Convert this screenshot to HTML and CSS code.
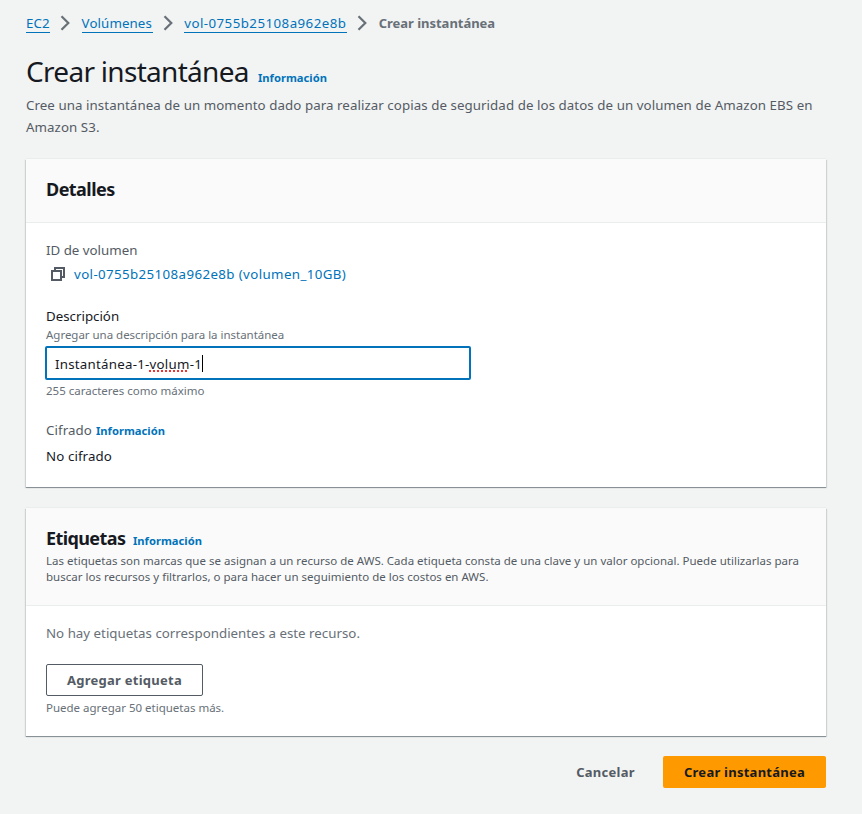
FILE: index.html
```html
<!DOCTYPE html>
<html lang="es">
<head>
<meta charset="utf-8">
<title>Crear instantánea</title>
<link rel="stylesheet" href="styles.css">
</head>
<body>
<main class="page">
  <nav class="crumbs">
    <a class="crumb crumb-ec2" href="#">EC2</a>
    <svg class="chevron" width="10" height="16" viewBox="0 0 10 16"><path d="M1.5 1.2 8.3 8 1.5 14.8"/></svg>
    <a class="crumb crumb-volumes" href="#">Volúmenes</a>
    <svg class="chevron" width="10" height="16" viewBox="0 0 10 16"><path d="M1.5 1.2 8.3 8 1.5 14.8"/></svg>
    <a class="crumb crumb-id" href="#">vol-0755b25108a962e8b</a>
    <svg class="chevron" width="10" height="16" viewBox="0 0 10 16"><path d="M1.5 1.2 8.3 8 1.5 14.8"/></svg>
    <span class="current">Crear instantánea</span>
  </nav>
  <header class="heading">
    <h1>Crear instantánea</h1>
    <a class="info" href="#">Información</a>
  </header>
  <p class="intro">Cree una instantánea de un momento dado para realizar copias de seguridad de los datos de un volumen de Amazon EBS en<br>Amazon S3.</p>

  <section class="card details">
    <div class="card-head"><h2>Detalles</h2></div>
    <div class="card-body">
      <div class="label volume-label">ID de volumen</div>
      <div class="volume">
        <svg class="copy" width="16" height="16" viewBox="0 0 16 16"><path d="M2 5h9v9H2z"/><path d="M5 5V2h9v9h-3"/></svg>
        <a class="volume-link" href="#">vol-0755b25108a962e8b (volumen_10GB)</a>
      </div>
      <div class="field-name">Descripción</div>
      <div class="hint field-hint">Agregar una descripción para la instantánea</div>
      <div class="input"><span class="value">Instantánea-1-<span class="misspelled">volum</span>-1</span><span class="caret"></span></div>
      <div class="hint limit">255 caracteres como máximo</div>
      <div class="encryption"><span class="label encryption-label">Cifrado</span><a class="info" href="#">Información</a></div>
      <div class="encryption-value">No cifrado</div>
    </div>
  </section>

  <section class="card tags">
    <div class="card-head">
      <div class="tags-title"><h2>Etiquetas</h2><a class="info" href="#">Información</a></div>
      <p class="tags-text">Las etiquetas son marcas que se asignan a un recurso de AWS. Cada etiqueta consta de una clave y un valor opcional. Puede utilizarlas para<br>buscar los recursos y filtrarlos, o para hacer un seguimiento de los costos en AWS.</p>
    </div>
    <div class="card-body">
      <div class="empty">No hay etiquetas correspondientes a este recurso.</div>
      <button class="button add" type="button">Agregar etiqueta</button>
      <div class="hint remaining">Puede agregar 50 etiquetas más.</div>
    </div>
  </section>

  <footer class="actions">
    <button class="button cancel" type="button">Cancelar</button>
    <button class="button primary" type="button">Crear instantánea</button>
  </footer>
</main>
</body>
</html>
```
FILE: styles.css
```css
* { box-sizing: border-box; }
body {
  margin: 0;
  background: #f2f3f3;
  color: #16191f;
  font: 13.3px/22px "Noto Sans", sans-serif;
}
.page { padding: 12px 36px 26px 26px; height: 814px; overflow: hidden; white-space: nowrap; }
h1, h2, p { margin: 0; }
a { color: #0073bb; text-decoration: none; }

.crumbs { display: flex; align-items: flex-start; height: 22px; }
.crumb { height: 21px; border-bottom: 1px solid #0073bb; letter-spacing: 0.1px; }
.crumb-ec2 { width: 24px; }
.crumb-volumes { width: 71px; }
.crumb-id { width: 163px; letter-spacing: 0.45px; }
.chevron { flex: none; margin: 3px 11.3px 0 10.3px; fill: none; stroke: #687078; stroke-width: 2.2; }
.current { color: #687078; font-size: 13px; font-weight: 700; letter-spacing: -0.03px; }

.heading { display: flex; align-items: baseline; height: 44px; margin-top: 15px; }
h1 { font-size: 28px; line-height: 44px; font-weight: 400; width: 232px; letter-spacing: -0.7px; }
.info { font-size: 11.2px; font-weight: 700; }
.intro { color: #545b64; letter-spacing: 0.07px; margin-top: 1px; }

.card {
  background: #fff;
  box-shadow: 0 -1px 0 #eaeded, 0 1px 0 #879196, 1px 1px 1px rgba(0, 28, 36, 0.15), -1px 1px 1px rgba(0, 28, 36, 0.15);
}
.card-head { background: #fafafa; border-bottom: 1px solid #eaeded; padding: 19px 20px 0; }
.card-body { padding: 0 20px; }
h2 { font-size: 18px; line-height: 22px; font-weight: 700; letter-spacing: -0.55px; }
.details { margin-top: 21px; height: 328px; }
.details .card-head { height: 64px; }
.label { color: #545b64; }
.volume-label { padding-top: 16px; height: 39px; }
.volume { display: flex; align-items: center; height: 24px; padding-left: 4px; }
.volume-link { letter-spacing: 0.39px; }
.copy { fill: none; stroke: #545b64; stroke-width: 2; margin-right: 8px; }
.field-name { margin-top: 19px; }
.hint { color: #687078; font-size: 11.5px; line-height: 16px; }
.field-hint { letter-spacing: -0.02px; }
.input {
  display: flex;
  align-items: center;
  width: 426px;
  height: 34px;
  margin: 3px 0 3px -1px;
  padding: 1px 0 0 8px;
  border: 2px solid #0073bb;
  border-radius: 2px;
}
.value { letter-spacing: 0.24px; }
.misspelled { text-decoration: underline dotted #e33 2px; text-underline-offset: 2px; text-decoration-skip-ink: none; }
.caret { width: 1px; height: 17px; background: #000; }
.encryption { display: flex; align-items: baseline; margin-top: 20px; }
.encryption-label { width: 50px; letter-spacing: 0.1px; }
.encryption-value { margin-top: 3px; letter-spacing: 0.1px; }

.tags { margin-top: 21px; height: 228px; }
.tags .card-head { height: 98px; }
.tags-title { display: flex; align-items: baseline; height: 26px; }
.tags-title h2 { width: 87px; letter-spacing: -0.6px; }
.tags-text { color: #545b64; font-size: 11.5px; line-height: 16px; letter-spacing: 0.007px; }
.empty { color: #687078; padding-top: 16px; letter-spacing: 0.01px; }
.button {
  height: 32px;
  padding: 0;
  border: 1px solid transparent;
  border-radius: 2px;
  background: transparent;
  color: #545b64;
  font: 700 13px/22px "Noto Sans", sans-serif;
  letter-spacing: 0.25px;
}
.add { display: block; width: 157px; margin-top: 20px; border-color: #545b64; }
.remaining { margin-top: 4px; }
.actions { display: flex; justify-content: flex-end; margin-top: 20px; }
.cancel { width: 101px; margin-right: 7px; }
.primary { width: 163px; background: #ff9900; color: #16191f; }
```
